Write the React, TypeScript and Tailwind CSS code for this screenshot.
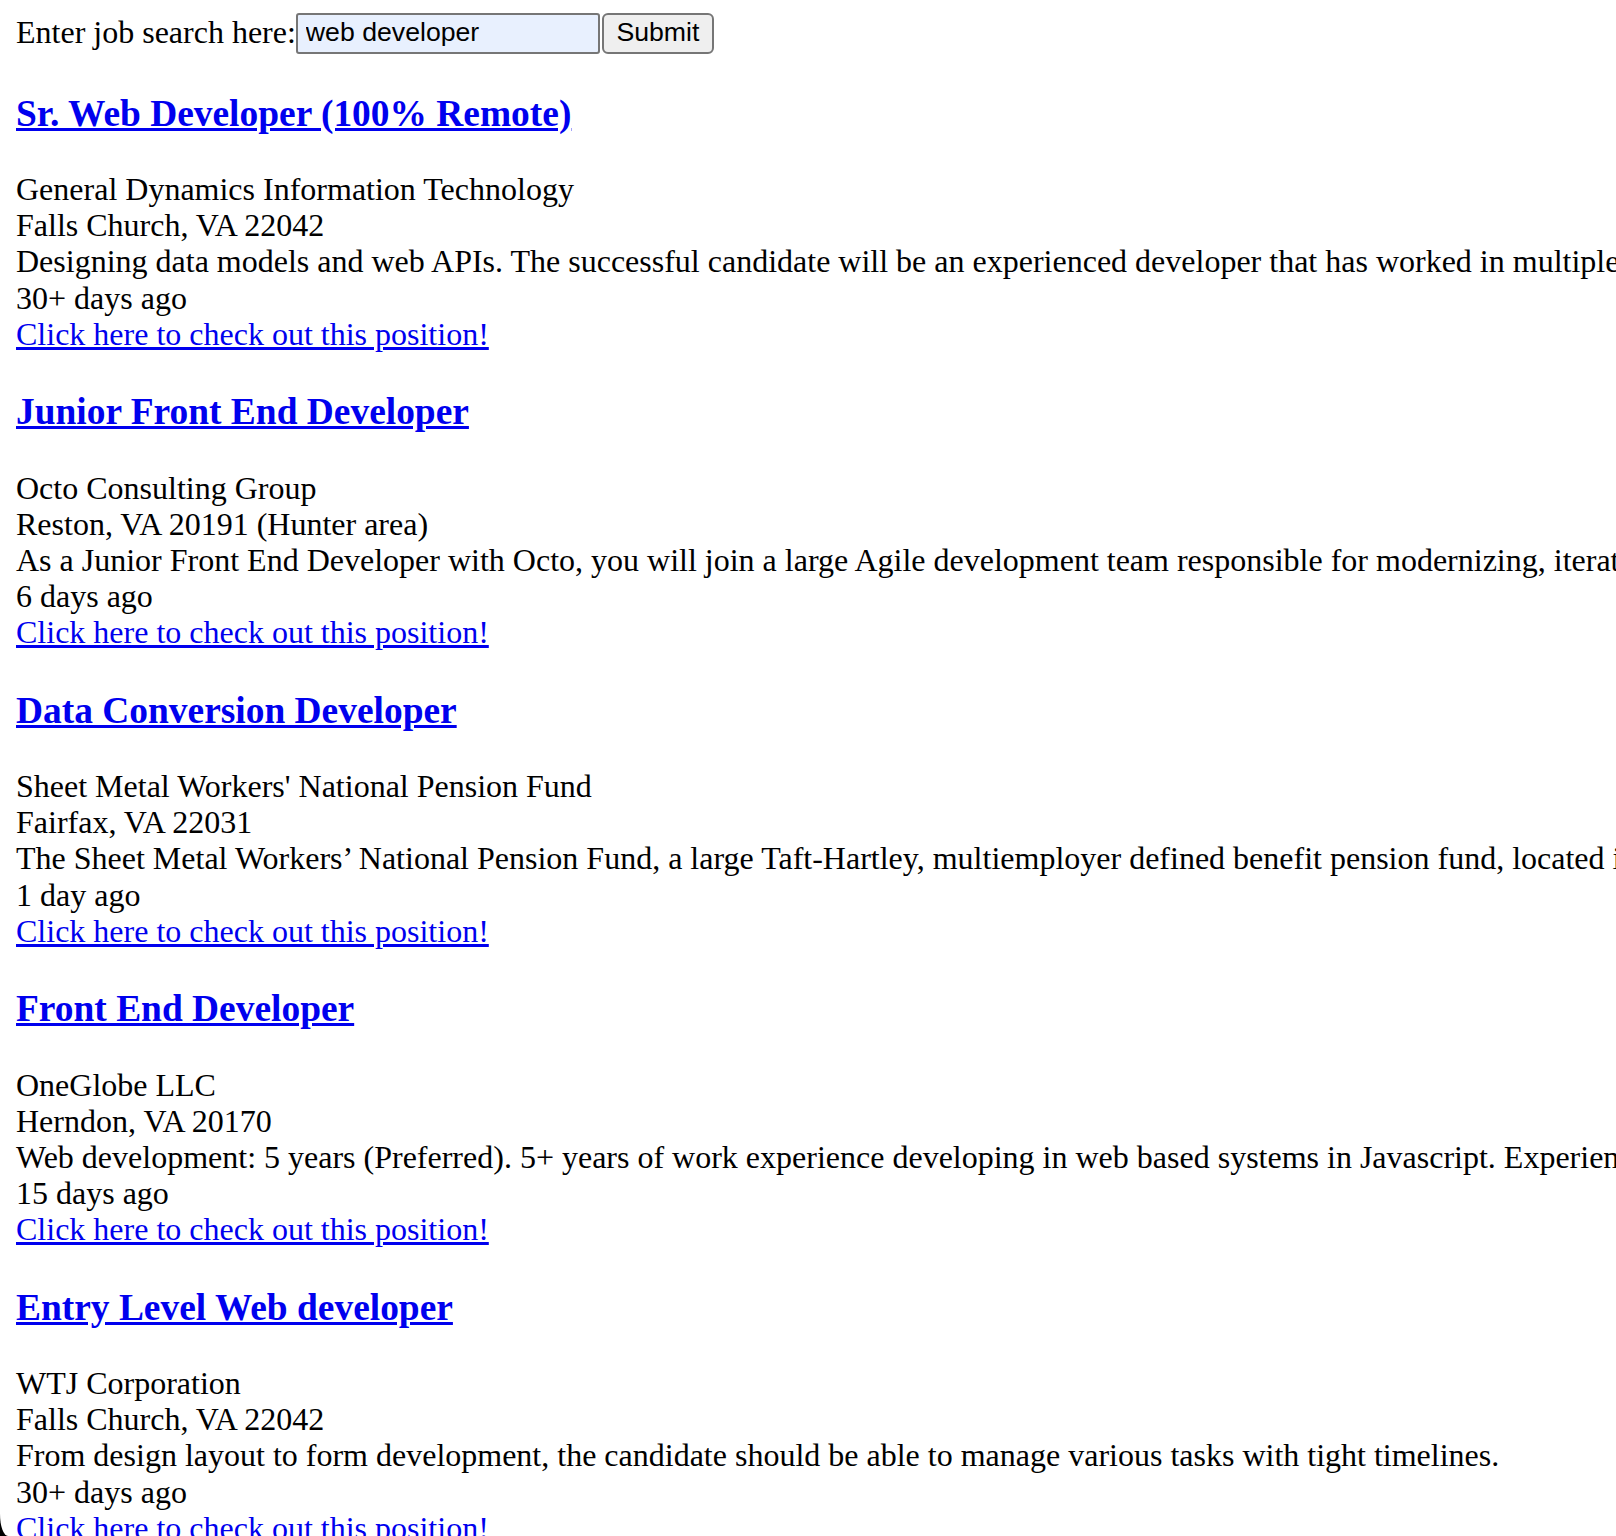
import React from 'react';

const jobs = [
  {
    title: 'Sr. Web Developer (100% Remote)',
    company: 'General Dynamics Information Technology',
    location: 'Falls Church, VA 22042',
    summary:
      'Designing data models and web APIs. The successful candidate will be an experienced developer that has worked in multiple environments and frameworks.',
    date: '30+ days ago',
  },
  {
    title: 'Junior Front End Developer',
    company: 'Octo Consulting Group',
    location: 'Reston, VA 20191 (Hunter area)',
    summary:
      'As a Junior Front End Developer with Octo, you will join a large Agile development team responsible for modernizing, iterating and maintaining applications.',
    date: '6 days ago',
  },
  {
    title: 'Data Conversion Developer',
    company: "Sheet Metal Workers' National Pension Fund",
    location: 'Fairfax, VA 22031',
    summary:
      'The Sheet Metal Workers’ National Pension Fund, a large Taft-Hartley, multiemployer defined benefit pension fund, located in Fairfax, Virginia, is seeking a developer.',
    date: '1 day ago',
  },
  {
    title: 'Front End Developer',
    company: 'OneGlobe LLC',
    location: 'Herndon, VA 20170',
    summary:
      'Web development: 5 years (Preferred). 5+ years of work experience developing in web based systems in Javascript. Experience with modern frameworks.',
    date: '15 days ago',
  },
  {
    title: 'Entry Level Web developer',
    company: 'WTJ Corporation',
    location: 'Falls Church, VA 22042',
    summary:
      'From design layout to form development, the candidate should be able to manage various tasks with tight timelines.',
    date: '30+ days ago',
  },
];

const serif = "font-['Liberation_Serif','Times_New_Roman',serif]";

const JobItem = ({ job }: { job: (typeof jobs)[number] }) => {
  return (
    <div className="flex flex-col">
      <h3 className="mt-[39px] mb-[36.5px] text-[37.44px] leading-[42px] font-bold">
        <a href="#" className="text-[#0000ee] underline">
          {job.title}
        </a>
      </h3>
      <div className="text-[32px] leading-[36.2px] text-black whitespace-nowrap">
        <div>{job.company}</div>
        <div>{job.location}</div>
        <div>{job.summary}</div>
        <div>{job.date}</div>
        <div>
          <a href="#" className="text-[#0000ee] underline">
            Click here to check out this position!
          </a>
        </div>
      </div>
    </div>
  );
};

const App = () => {
  const [query, setQuery] = React.useState('web developer');

  return (
    <div className={`w-full overflow-hidden bg-white text-black ${serif}`}>
      <div className="px-4 flex flex-col">
        <form
          className="mt-[12.5px] h-[41px] flex items-stretch"
          onSubmit={event => event.preventDefault()}
        >
          <label className="text-[32px] leading-[39px] whitespace-nowrap">
            Enter job search here:
          </label>
          <input
            value={query}
            onChange={event => setQuery(event.target.value)}
            className="w-[304px] border-2 border-[#767676] rounded-[3px] bg-[#e8f0fe] pl-[8px] pr-1 pb-[2px] text-[26.67px] font-['Liberation_Sans',Arial,sans-serif] text-black outline-none"
            type="text"
          />
          <button
            type="submit"
            className="ml-[2px] w-[112px] flex items-start justify-center border-2 border-[#767676] rounded-[6px] bg-[#efefef] pt-[1px] text-[26.67px] leading-[32px] font-['Liberation_Sans',Arial,sans-serif] text-black"
          >
            Submit
          </button>
        </form>
        {jobs.map((job, index) => (
          <JobItem key={index} job={job} />
        ))}
      </div>
      <div className="fixed left-0 bottom-0 w-[8px] h-[22px] bg-black">
        <div className="w-full h-full bg-white rounded-bl-[8px_22px]" />
      </div>
    </div>
  );
};

export default App;
